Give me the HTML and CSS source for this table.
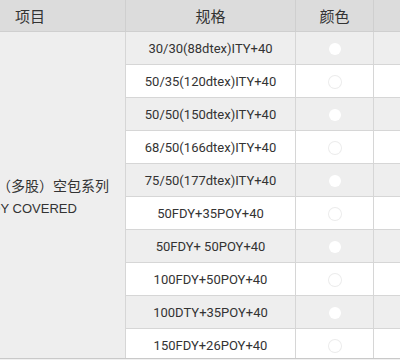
FILE: index.html
```html
<!DOCTYPE html>
<html lang="zh">
<head>
<meta charset="utf-8">
<link rel="stylesheet" href="styles.css">
</head>
<body>
<div class="wrap">
<table class="spec">
  <colgroup>
    <col class="c-item"><col class="c-spec"><col class="c-color"><col class="c-more">
  </colgroup>
  <thead>
    <tr><th>项目</th><th>规格</th><th>颜色</th><th></th></tr>
  </thead>
  <tbody>
    <tr class="alt"><td class="item" rowspan="10"><span class="cn">锦纶氨纶（多股）空包系列</span><span class="en">FDY COVERED</span></td><td>30/30(88dtex)ITY+40</td><td><span class="dot"></span></td><td></td></tr>
    <tr><td>50/35(120dtex)ITY+40</td><td><span class="dot"></span></td><td></td></tr>
    <tr class="alt"><td>50/50(150dtex)ITY+40</td><td><span class="dot"></span></td><td></td></tr>
    <tr><td>68/50(166dtex)ITY+40</td><td><span class="dot"></span></td><td></td></tr>
    <tr class="alt"><td>75/50(177dtex)ITY+40</td><td><span class="dot"></span></td><td></td></tr>
    <tr><td>50FDY+35POY+40</td><td><span class="dot"></span></td><td></td></tr>
    <tr class="alt"><td>50FDY+ 50POY+40</td><td><span class="dot"></span></td><td></td></tr>
    <tr><td>100FDY+50POY+40</td><td><span class="dot"></span></td><td></td></tr>
    <tr class="alt"><td>100DTY+35POY+40</td><td><span class="dot"></span></td><td></td></tr>
    <tr><td>150FDY+26POY+40</td><td><span class="dot"></span></td><td></td></tr>
  </tbody>
</table>
</div>
</body>
</html>
```
FILE: styles.css
```css
html, body {
  margin: 0;
  padding: 0;
  background: #f0f0f0;
}
.wrap {
  width: 400px;
  height: 358px;
  overflow: hidden;
  border-bottom: 1px solid #c9c9c9;
}
.spec {
  margin-left: -66px;
  border-collapse: collapse;
  table-layout: fixed;
  width: 539px;
  font-family: Roboto, "Noto Sans CJK SC", sans-serif;
  color: #333;
}
.c-item { width: 191px; }
.c-spec { width: 170px; }
.c-color { width: 78px; }
.c-more { width: 100px; }
.spec th {
  height: 31px;
  padding: 0;
  background: #dcdcdc;
  font-weight: normal;
  font-size: 15px;
  border: 1px solid #cfcfcf;
  border-top: none;
  text-align: center;
}
.spec td {
  height: 32px;
  padding: 0;
  font-size: 13px;
  text-align: center;
  border: 1px solid #d6d6d6;
  background: #fff;
}
.spec tr.alt td {
  background: #eeeeee;
}
.spec td.item {
  background: #efefef;
}
.item .cn {
  display: block;
  padding-right: 10px;
  font-family: "Noto Sans CJK SC", sans-serif;
  font-size: 14px;
  line-height: 24px;
  white-space: nowrap;
}
.item .en {
  display: block;
  font-family: "Liberation Sans", Arial, sans-serif;
  font-size: 13px;
  line-height: 24px;
  white-space: nowrap;
}
.dot {
  display: inline-block;
  width: 12px;
  height: 12px;
  border-radius: 50%;
  background: #fff;
  box-shadow: 0 0 0 1px #ececec;
  vertical-align: middle;
}
.alt .dot {
  box-shadow: none;
}
```
